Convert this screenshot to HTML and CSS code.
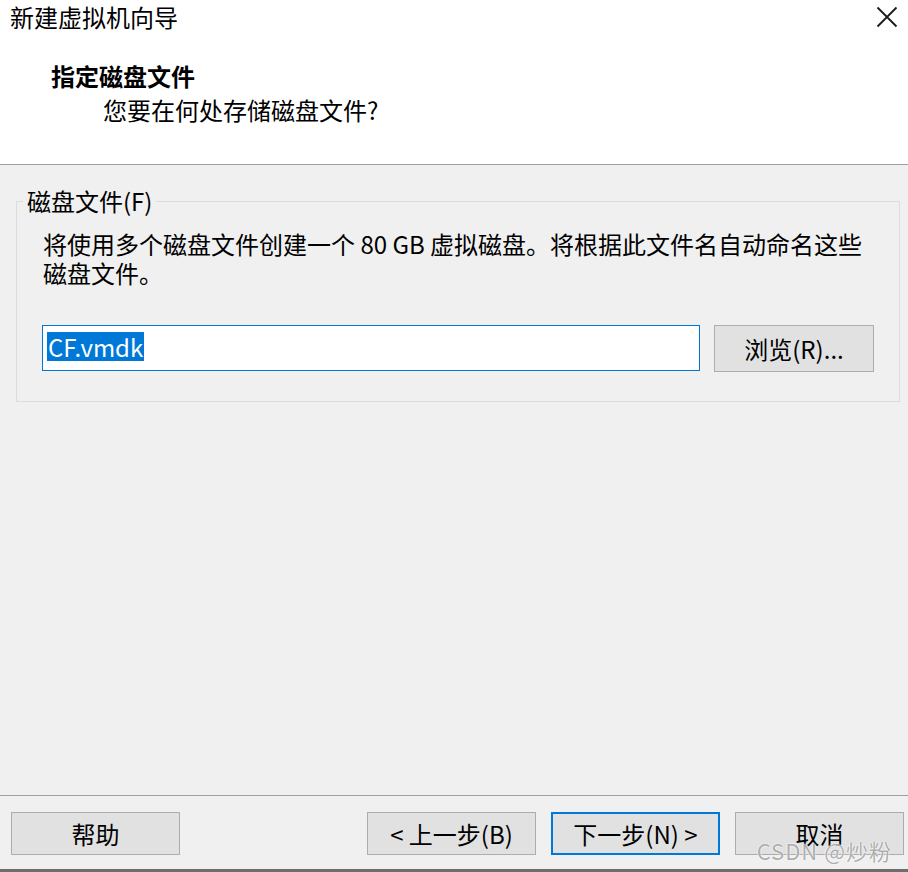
FILE: index.html
```html
<!DOCTYPE html>
<html lang="zh-CN">
<head>
<meta charset="utf-8">
<title>新建虚拟机向导</title>
<link rel="stylesheet" href="styles.css">
</head>
<body>
<div class="window">
  <header class="header">
    <div class="titlebar">
      <span class="title">新建虚拟机向导</span>
      <svg class="close" width="22" height="22" viewBox="0 0 22 22" aria-label="关闭">
        <path d="M1.5 1.5 L20.5 20.5 M20.5 1.5 L1.5 20.5" stroke="#1a1a1a" stroke-width="1.8" fill="none"/>
      </svg>
    </div>
    <h1 class="heading">指定磁盘文件</h1>
    <p class="subtitle">您要在何处存储磁盘文件?</p>
  </header>

  <main class="main">
    <fieldset class="group">
      <legend class="legend">磁盘文件(F)</legend>
      <p class="desc">将使用多个磁盘文件创建一个 80 GB 虚拟磁盘。将根据此文件名自动命名这些磁盘文件。</p>
      <div class="file-row">
        <div class="textbox"><span class="selected">CF.vmdk</span></div>
        <button class="btn browse">浏览(R)...</button>
      </div>
    </fieldset>
  </main>

  <footer class="footer">
    <button class="btn">帮助</button>
    <div class="nav">
      <button class="btn">&lt; 上一步(B)</button>
      <button class="btn primary">下一步(N) &gt;</button>
      <button class="btn">取消</button>
    </div>
    <span class="watermark">CSDN @炒粉</span>
  </footer>
</div>
</body>
</html>
```

FILE: styles.css
```css
* { box-sizing: border-box; }

html, body {
  margin: 0;
  padding: 0;
  background: #f0f0f0;
}

body {
  font-family: "Noto Sans CJK SC", "Noto Sans", sans-serif;
  font-size: 24px;
  color: #000;
}

.window {
  width: 908px;
  height: 872px;
  display: flex;
  flex-direction: column;
  border-bottom: 3px solid #6e6e6e;
}

.header {
  background: #fff;
  height: 165px;
  border-bottom: 1px solid #a0a0a0;
  flex: none;
}

.titlebar {
  display: flex;
  justify-content: space-between;
  align-items: flex-start;
  height: 34px;
  padding: 2px 10px 0 10px;
}

.title {
  line-height: 30px;
  font-size: 24px;
}

.close {
  margin-top: 4px;
}

.heading {
  margin: 26px 0 0 51px;
  font-size: 24px;
  font-weight: bold;
  line-height: 32px;
}

.subtitle {
  margin: 2px 0 0 103px;
  line-height: 32px;
}

.main {
  flex: 1;
}

.group {
  margin: 21px 8px 0 16px;
  padding: 13px 0 29px 0;
  border: 1px solid #dcdcdc;
  min-width: 0;
}

.legend {
  margin-left: 6px;
  padding: 0 4px;
  line-height: 30px;
}

.desc {
  margin: 0 0 0 26px;
  width: 826px;
  line-height: 29px;
}

.file-row {
  display: flex;
  align-items: flex-start;
  gap: 14px;
  margin: 38px 0 0 25px;
}

.textbox {
  width: 658px;
  height: 46px;
  background: #fff;
  border: 1px solid #0078d7;
  padding: 3px 0 0 4px;
}

.selected {
  display: inline-block;
  height: 29px;
  line-height: 29px;
  background: #0078d7;
  color: #fff;
  padding: 0 1px;
}

.btn {
  font-family: inherit;
  font-size: 24px;
  color: #000;
  background: #e1e1e1;
  border: 1px solid #adadad;
  width: 169px;
  height: 43px;
  padding: 0;
  line-height: 1;
}

.browse {
  width: 160px;
  height: 47px;
}

.primary {
  border: 2px solid #0078d7;
}

.footer {
  position: relative;
  flex: none;
  height: 74px;
  border-top: 1px solid #a0a0a0;
  padding: 16px 4px 0 11px;
  display: flex;
  justify-content: space-between;
  align-items: flex-start;
}

.nav {
  display: flex;
  gap: 15px;
}

.watermark {
  position: absolute;
  right: 16px;
  bottom: 6px;
  font-size: 22px;
  letter-spacing: 1px;
  line-height: 26px;
  color: rgba(120, 120, 120, 0.6);
  text-shadow: 0 0 2px #fff, 0 0 1px #fff;
  pointer-events: none;
}
```
